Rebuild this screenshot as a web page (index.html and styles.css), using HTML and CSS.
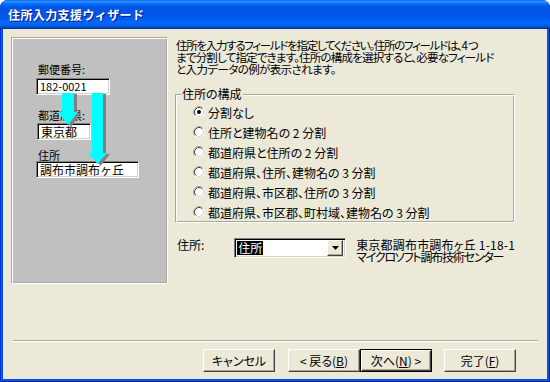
FILE: index.html
```html
<!DOCTYPE html>
<html lang="ja">
<head>
<meta charset="utf-8">
<title>住所入力支援ウィザード</title>
<link rel="stylesheet" href="styles.css">
</head>
<body>
<div class="window">
  <div class="titlebar"><span class="title">住所入力支援ウィザード</span></div>
  <div class="client">
    <div class="main">
      <div class="panel">
        <div class="lbl l1">郵便番号:</div>
        <div class="tbox zip">182-0021</div>
        <div class="lbl l2">都道府県:</div>
        <div class="tbox pref">東京都</div>
        <div class="lbl l3">住所</div>
        <div class="tbox addr">調布市調布ヶ丘</div>
        <svg class="arrows" width="155" height="245" viewBox="0 0 155 245">
          <g fill="#808080">
            <rect x="53" y="56" width="12" height="19"/>
            <polygon points="49,75 69,75 59,89"/>
            <rect x="83" y="56" width="11" height="61"/>
            <polygon points="79,116 98,116 88.5,128"/>
          </g>
          <g fill="#00ffff">
            <rect x="50" y="55" width="12" height="19"/>
            <polygon points="46,74 66,74 56,87"/>
            <rect x="80" y="55" width="11" height="61"/>
            <polygon points="76,115 95,115 85.5,126"/>
          </g>
        </svg>
      </div>
      <div class="content">
        <p class="desc"><span class="d1">住所を入力するフィールドを指定してください。住所のフィールドは、4 つ</span><br><span class="d2">まで分割して指定できます。住所の構成を選択すると、必要なフィールド</span><br><span class="d3">と入力データの例が表示されます。</span></p>
        <div class="group">
          <span class="group-label">住所の構成</span>
          <div class="radio"><svg class="rb" width="12" height="12" viewBox="0 0 12 12"><circle cx="6" cy="6" r="5.5" fill="#fff"/><path d="M2.11,9.89 A5.5,5.5 0 0 1 9.89,2.11" fill="none" stroke="#aca899"/><path d="M2.82,9.18 A4.5,4.5 0 0 1 9.18,2.82" fill="none" stroke="#404040"/><path d="M9.18,2.82 A4.5,4.5 0 0 1 2.82,9.18" fill="none" stroke="#d4d0c8"/><circle cx="6" cy="6" r="2" fill="#000"/></svg><span>分割なし</span></div>
          <div class="radio"><svg class="rb" width="12" height="12" viewBox="0 0 12 12"><circle cx="6" cy="6" r="5.5" fill="#fff"/><path d="M2.11,9.89 A5.5,5.5 0 0 1 9.89,2.11" fill="none" stroke="#aca899"/><path d="M2.82,9.18 A4.5,4.5 0 0 1 9.18,2.82" fill="none" stroke="#404040"/><path d="M9.18,2.82 A4.5,4.5 0 0 1 2.82,9.18" fill="none" stroke="#d4d0c8"/></svg><span>住所と建物名の 2 分割</span></div>
          <div class="radio"><svg class="rb" width="12" height="12" viewBox="0 0 12 12"><circle cx="6" cy="6" r="5.5" fill="#fff"/><path d="M2.11,9.89 A5.5,5.5 0 0 1 9.89,2.11" fill="none" stroke="#aca899"/><path d="M2.82,9.18 A4.5,4.5 0 0 1 9.18,2.82" fill="none" stroke="#404040"/><path d="M9.18,2.82 A4.5,4.5 0 0 1 2.82,9.18" fill="none" stroke="#d4d0c8"/></svg><span>都道府県と住所の 2 分割</span></div>
          <div class="radio"><svg class="rb" width="12" height="12" viewBox="0 0 12 12"><circle cx="6" cy="6" r="5.5" fill="#fff"/><path d="M2.11,9.89 A5.5,5.5 0 0 1 9.89,2.11" fill="none" stroke="#aca899"/><path d="M2.82,9.18 A4.5,4.5 0 0 1 9.18,2.82" fill="none" stroke="#404040"/><path d="M9.18,2.82 A4.5,4.5 0 0 1 2.82,9.18" fill="none" stroke="#d4d0c8"/></svg><span>都道府県、住所、建物名の 3 分割</span></div>
          <div class="radio"><svg class="rb" width="12" height="12" viewBox="0 0 12 12"><circle cx="6" cy="6" r="5.5" fill="#fff"/><path d="M2.11,9.89 A5.5,5.5 0 0 1 9.89,2.11" fill="none" stroke="#aca899"/><path d="M2.82,9.18 A4.5,4.5 0 0 1 9.18,2.82" fill="none" stroke="#404040"/><path d="M9.18,2.82 A4.5,4.5 0 0 1 2.82,9.18" fill="none" stroke="#d4d0c8"/></svg><span>都道府県、市区郡、住所の 3 分割</span></div>
          <div class="radio"><svg class="rb" width="12" height="12" viewBox="0 0 12 12"><circle cx="6" cy="6" r="5.5" fill="#fff"/><path d="M2.11,9.89 A5.5,5.5 0 0 1 9.89,2.11" fill="none" stroke="#aca899"/><path d="M2.82,9.18 A4.5,4.5 0 0 1 9.18,2.82" fill="none" stroke="#404040"/><path d="M9.18,2.82 A4.5,4.5 0 0 1 2.82,9.18" fill="none" stroke="#d4d0c8"/></svg><span>都道府県、市区郡、町村域、建物名の 3 分割</span></div>
        </div>
        <div class="addr-row">
          <div class="addr-label">住所:</div>
          <div class="combo">
            <span class="combo-sel">住所</span>
            <span class="combo-btn"><svg width="7" height="4" viewBox="0 0 7 4"><polygon points="0,0 7,0 3.5,4" fill="#000"/></svg></span>
          </div>
          <div class="example"><span class="ex1">東京都調布市調布ヶ丘 1-18-1</span><br><span class="ex2">マイクロソフト調布技術センター</span></div>
        </div>
      </div>
    </div>
    <div class="sep"></div>
    <div class="buttons">
      <div class="btn">キャンセル</div>
      <div class="btn back">&lt; 戻る(<u>B</u>)</div>
      <div class="btn default">次へ(<u>N</u>) &gt;</div>
      <div class="btn finish">完了(<u>F</u>)</div>
    </div>
  </div>
</div>
</body>
</html>
```

FILE: styles.css
```css
html, body {
  margin: 0;
  padding: 0;
  background: #ffffff;
}

body {
  font-family: "Noto Sans CJK JP", "Liberation Sans", sans-serif;
  font-size: 12px;
  font-feature-settings: "palt";
  color: #000;
}

.window {
  width: 550px;
  height: 382px;
  display: flex;
  flex-direction: column;
  background: #0055e5;
  border-radius: 8px 8px 0 0;
  box-shadow: inset 1px 0 #0831d9, inset -1px -1px #001f9c;
  overflow: hidden;
}

.titlebar {
  height: 29px;
  flex: none;
  display: flex;
  align-items: center;
  padding-left: 8px;
  padding-top: 1px;
  box-sizing: border-box;
  background: linear-gradient(to bottom,
    #0058ee 0%, #3593ff 4%, #288eff 7%, #127dff 10%, #036ffc 14%,
    #0262ee 18%, #0057e5 24%, #0054e3 30%, #0055eb 56%, #005bf5 66%,
    #026afe 76%, #0062ef 86%, #0052d6 92%, #0040ab 96%, #003092 100%);
}

.title {
  color: #fff;
  font-weight: bold;
  font-size: 12px;
  font-feature-settings: normal;
  letter-spacing: 0.4px;
  text-shadow: 1px 1px #0a1883;
  line-height: 14px;
}

.client {
  flex: 1;
  margin: 0 3px 3px 3px;
  background: #ece9d8;
  display: flex;
  flex-direction: column;
}

.main {
  display: flex;
  padding: 8px 0 0 8px;
}

.panel {
  position: relative;
  background: #c0c0c0;
  border: 1px solid;
  border-color: #aca899 #ffffff #ffffff #aca899;
  box-shadow: inset 1px 1px #ffffff, inset -1px -1px #aca899;
  padding: 25px 0 0 24px;
  box-sizing: content-box;
  width: 131px;
  height: 220px;
  font-size: 11px;
  font-feature-settings: normal;
}

.lbl {
  line-height: 12px;
  margin-left: 2px;
  color: #000;
}

.l2 { margin-top: 14px; }
.l3 { margin-top: 9px; }

.tbox {
  height: 13px;
  line-height: 13px;
  background: #fff;
  border: 1px solid;
  border-color: #808080 #ffffff #ffffff #808080;
  box-shadow: inset 1px 1px #000, inset -1px -1px #d4d0c8;
  padding: 1px 1px 1px 3px;
  font-size: 11px;
}

.zip { width: 68px; margin-top: 3px; }
.pref { width: 48px; margin-top: 2px; margin-left: 1px; font-size: 12px; }
.addr { width: 97px; margin-top: 0; font-size: 12px; }

.arrows {
  position: absolute;
  top: 0;
  left: 0;
}

.content {
  width: 340px;
  margin-left: 7px;
  padding-top: 2px;
}

.desc {
  margin: 0 0 0 1px;
  line-height: 12px;
  font-size: 11.5px;
  white-space: nowrap;
}

.d1 { letter-spacing: -1.3px; }
.d2 { letter-spacing: -0.8px; }
.d3 { letter-spacing: -0.6px; }

.group {
  position: relative;
  margin-top: 19px;
  height: 120px;
  padding: 7px 0 0 17px;
  border: 1px solid;
  border-color: #aca899 #ffffff #ffffff #aca899;
  box-shadow: inset 1px 1px #ffffff, inset -1px -1px #aca899;
}

.group-label {
  position: absolute;
  top: -7px;
  left: 5px;
  padding: 0 1px;
  line-height: 12px;
  background: #ece9d8;
}

.radio {
  height: 20px;
  display: flex;
  align-items: center;
  gap: 3px;
  white-space: nowrap;
}

.rb { flex: none; }

.addr-row {
  display: flex;
  align-items: flex-start;
  margin-top: 15px;
}

.addr-label {
  width: 59px;
  padding-left: 2px;
  line-height: 12px;
  margin-top: 1px;
}

.combo {
  width: 109px;
  height: 14px;
  background: #fff;
  border: 1px solid;
  border-color: #808080 #ffffff #ffffff #808080;
  box-shadow: inset 1px 1px #000, inset -1px -1px #d4d0c8;
  padding: 2px;
  display: flex;
  align-items: stretch;
  justify-content: space-between;
}

.combo-sel {
  background: #000;
  color: #fff;
  line-height: 14px;
  padding: 0 1px;
}

.combo-btn {
  width: 14px;
  background: #ece9d8;
  border: 1px solid;
  border-color: #ffffff #404040 #404040 #ffffff;
  box-shadow: inset -1px -1px #aca899;
  display: flex;
  align-items: center;
  justify-content: center;
  margin: -1px 0;
}

.example {
  margin-left: 10px;
  line-height: 12px;
  margin-top: 1px;
  white-space: nowrap;
}

.ex1 { letter-spacing: 0.2px; }
.ex2 { letter-spacing: -1.2px; }

.sep {
  margin: auto 9px 0 10px;
  height: 1px;
  border-top: 1px solid #aca899;
  background: #fff;
}

.buttons {
  display: flex;
  justify-content: flex-end;
  padding: 7px 31px 7px 0;
}

.btn {
  width: 70px;
  height: 21px;
  line-height: 21px;
  text-align: center;
  background: #ece9d8;
  border: 1px solid;
  border-color: #ffffff #404040 #404040 #ffffff;
  box-shadow: inset -1px -1px #aca899;
  font-size: 12px;
  white-space: nowrap;
}

.btn.back { margin-left: 13px; }

.btn.default {
  border: 1px solid #000;
  box-shadow: inset 1px 1px #ffffff, inset -1px -1px #404040, inset -2px -2px #aca899;
}

.btn.finish { margin-left: 12px; }

u { text-decoration: underline; text-underline-offset: 1px; }
```
